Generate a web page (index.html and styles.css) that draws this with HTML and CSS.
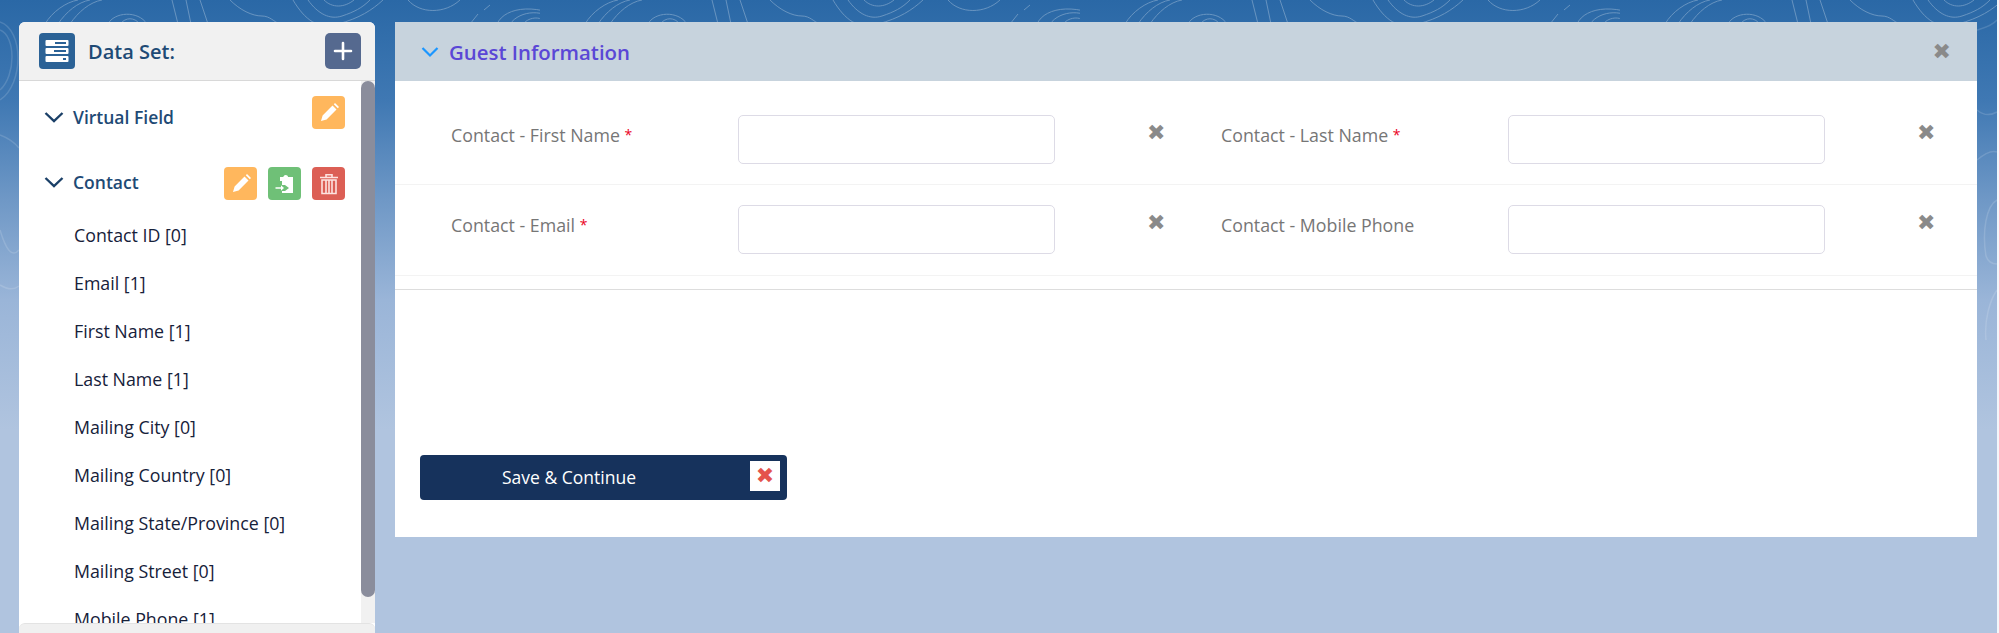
FILE: index.html
```html
<!DOCTYPE html>
<html lang="en">
<head>
    <meta charset="UTF-8">
    <title>Guest Information</title>
    <link rel="stylesheet" href="styles.css">
</head>
<body>
    <svg class="contours" width="1999" height="430" viewBox="0 0 1999 430" fill="none" stroke="#ffffff">
        <defs>
            <pattern id="topo" width="540" height="24" patternUnits="userSpaceOnUse">
                <path d="M45 24C52 12 66 2 78 0M58 24C66 12 78 2 90 0M70 24C78 12 90 2 102 0M108 24C114 12 138 10 147 24M120 24C126 17 134 17 140 24"/>
                <path d="M172 0L178 24M186 0L191 24M200 0L208 24"/>
                <path d="M230 0C240 10 252 16 262 16C270 16 274 22 280 24"/>
                <path d="M293 0C305 20 318 30 338 24C360 18 372 10 383 0M308 0C318 14 330 20 342 16C354 12 362 8 370 0M324 0C332 8 344 8 354 0"/>
                <path d="M408 0C420 14 445 14 460 0M470 24L478 14M484 10L490 5"/>
                <path d="M497 24C505 6 540 2 574 24M510 24C520 10 545 8 560 24M523 24C530 16 542 16 548 24"/>
            </pattern>
        </defs>
        <rect width="1999" height="24" fill="url(#topo)" stroke="none" opacity="0.28"/>
        <g stroke-opacity="0.14" stroke-width="1.5">
            <path d="M0 30C16 36 16 76 0 90M0 22C24 30 24 84 0 100M0 135C8 138 14 142 19 148M0 230C6 250 12 258 19 250M0 285C8 290 14 290 19 286"/>
            <path d="M1977 30C1984 28 1992 26 1997 20M1977 110C1984 116 1990 116 1997 112M1977 160C1984 154 1992 150 1997 152M1997 200C1986 206 1982 232 1986 256C1988 262 1992 264 1997 264M1997 290C1990 300 1984 320 1986 340"/>
        </g>
    </svg>

    <div class="page">
        <aside class="sidebar">
            <div class="sidebar-head">
                <span class="head-icon">
                    <svg width="36" height="36" viewBox="0 0 36 36" fill="#fff">
                        <rect x="6.500" y="7" width="23" height="6" rx="1"/>
                        <rect x="6.500" y="15" width="23" height="6" rx="1"/>
                        <rect x="6.500" y="23" width="23" height="6" rx="1"/>
                        <rect x="16" y="9" width="11" height="2" fill="#2b6296"/>
                        <rect x="15" y="17" width="12" height="2" fill="#2b6296"/>
                        <rect x="24" y="25" width="3" height="2" fill="#2b6296"/>
                    </svg>
                </span>
                <span class="head-title">Data Set:</span>
                <button class="add-btn">
                    <svg width="20" height="20" viewBox="0 0 20 20" stroke="#fff" stroke-width="2.6" stroke-linecap="round"><path d="M10 2v16M2 10h16"/></svg>
                </button>
            </div>
            <div class="sidebar-body">
                <div class="tree">
                    <div class="group group-first">
                        <svg class="chev" width="20" height="12" viewBox="0 0 20 12" fill="none" stroke="#1b4068" stroke-width="2.4"><path d="M1.500 2l8.500 8 8.500-8"/></svg>
                        <span class="group-name">Virtual Field</span>
                        <span class="tools">
                            <span class="tool orange">
                                <svg width="22" height="22" viewBox="0 0 22 22" fill="#fff"><path d="M3 19l1.600-5.600L14.500 3.500l4 4L8.600 17.400zM15.800 2.200l1.200-1.200 4 4-1.200 1.200z"/></svg>
                            </span>
                        </span>
                    </div>
                    <div class="group group-contact">
                        <svg class="chev" width="20" height="12" viewBox="0 0 20 12" fill="none" stroke="#1b4068" stroke-width="2.4"><path d="M1.500 2l8.500 8 8.500-8"/></svg>
                        <span class="group-name">Contact</span>
                        <span class="tools">
                            <span class="tool orange">
                                <svg width="22" height="22" viewBox="0 0 22 22" fill="#fff"><path d="M3 19l1.600-5.600L14.500 3.500l4 4L8.600 17.400zM15.800 2.200l1.200-1.200 4 4-1.200 1.200z"/></svg>
                            </span>
                            <span class="tool green">
                                <svg width="24" height="24" viewBox="0 0 24 24" fill="#fff"><path d="M7 5h3.200a2.600 2.600 0 0 1 5 0H20v16H9v-2h3l4-3-4-3H9V9H7z"/><path d="M2.500 15.200h5.500v-2l3 2.800-3 2.800v-2H2.500z"/></svg>
                            </span>
                            <span class="tool red">
                                <svg width="24" height="24" viewBox="0 0 24 24" fill="none" stroke="#fde3e0" stroke-width="1.600"><path d="M3 5.500h18M9 5V2.800h6V5"/><path d="M5 8h14v13.500H5zM9 8v13.500M12 8v13.500M15 8v13.500"/></svg>
                            </span>
                        </span>
                    </div>
                    <ul class="field-list">
                        <li>Contact ID [0]</li>
                        <li>Email [1]</li>
                        <li>First Name [1]</li>
                        <li>Last Name [1]</li>
                        <li>Mailing City [0]</li>
                        <li>Mailing Country [0]</li>
                        <li>Mailing State/Province [0]</li>
                        <li>Mailing Street [0]</li>
                        <li>Mobile Phone [1]</li>
                    </ul>
                </div>
                <div class="scroll-track"><div class="scroll-thumb"></div></div>
            </div>
            <div class="sidebar-foot"></div>
        </aside>

        <main class="panel">
            <div class="panel-head">
                <svg width="18" height="12" viewBox="0 0 18 12" fill="none" stroke="#1b96ff" stroke-width="2.200"><path d="M1.500 2l7.500 7.500L16.500 2"/></svg>
                <span class="panel-title">Guest Information</span>
                <span class="x-icon">&#10006;</span>
            </div>
            <div class="form-row form-row-first">
                <div class="field">
                    <label>Contact - First Name <span class="req">*</span></label>
                    <input type="text">
                    <span class="x-icon">&#10006;</span>
                </div>
                <div class="field">
                    <label>Contact - Last Name <span class="req">*</span></label>
                    <input type="text">
                    <span class="x-icon">&#10006;</span>
                </div>
            </div>
            <div class="form-row">
                <div class="field">
                    <label>Contact - Email <span class="req">*</span></label>
                    <input type="text">
                    <span class="x-icon">&#10006;</span>
                </div>
                <div class="field">
                    <label>Contact - Mobile Phone</label>
                    <input type="text">
                    <span class="x-icon">&#10006;</span>
                </div>
            </div>
            <div class="divider"></div>
            <div class="actions">
                <button class="save-btn">
                    <span class="save-label">Save &amp; Continue</span>
                    <span class="save-x">&#10006;</span>
                </button>
            </div>
        </main>
    </div>
</body>
</html>
```

FILE: styles.css
```css
html, body {
    margin: 0;
    padding: 0;
    height: 100%;
    overflow: hidden;
}
body {
    font-family: "Open Sans", Arial, sans-serif;
    background: linear-gradient(to bottom, #2a68a6 0, #3f78b3 100px, #6f98c6 200px, #9ab5d8 300px, #b0c4df 430px, #b0c4df 100%);
    position: relative;
}
/* thin light edge on the far right of the capture */
body::after {
    content: "";
    position: absolute;
    top: 0;
    right: 0;
    bottom: 0;
    width: 2px;
    background-color: #f4f6fa;
}
.contours {
    position: absolute;
    top: 0;
    left: 0;
}
.page {
    position: relative;
    display: flex;
    align-items: flex-start;
    gap: 20px;
    padding: 22px 22px 0 19px;
    height: 611px;
}

/* left column */
.sidebar {
    width: 356px;
    flex-shrink: 0;
    height: 611px;
    display: flex;
    flex-direction: column;
    border-radius: 6px 6px 0 0;
    overflow: hidden;
    background-color: #fff;
}
.sidebar-head {
    height: 59px;
    flex-shrink: 0;
    box-sizing: border-box;
    display: flex;
    align-items: center;
    padding: 0 14px 0 20px;
    background-color: #f1f1f1;
    border-bottom: 1px solid #d8d8d8;
}
.head-icon {
    width: 36px;
    height: 36px;
    border-radius: 4px;
    background-color: #2b6296;
    display: flex;
}
.head-title {
    margin-left: 13px;
    font-size: 20px;
    font-weight: 600;
    color: #1e4a75;
    flex: 1;
}
.add-btn {
    width: 36px;
    height: 36px;
    border: none;
    border-radius: 5px;
    padding: 0;
    background-color: #55698f;
    display: flex;
    align-items: center;
    justify-content: center;
}
.sidebar-body {
    flex: 1;
    display: flex;
    min-height: 0;
}
.tree {
    flex: 1;
    overflow: hidden;
}
.scroll-track {
    width: 14px;
    background-color: #f1f1f1;
}
.scroll-thumb {
    height: 516px;
    background-color: #8a8d9c;
    border-radius: 7px;
}
.group {
    display: flex;
    align-items: center;
    height: 33px;
    padding: 0 0 0 25px;
    margin-top: 29px;
}
.group-first {
    height: 42px;
    margin-top: 15px;
}
.group-first .tools {
    align-self: flex-start;
}
.group-name {
    margin-left: 9px;
    font-size: 17.500px;
    font-weight: 600;
    color: #1e4a75;
    flex: 1;
}
.group-contact .group-name,
.group-contact .chev {
    margin-bottom: 4px;
}
.tools {
    display: flex;
    gap: 11px;
    padding-right: 16px;
}
.tool {
    width: 33px;
    height: 33px;
    border-radius: 4px;
    display: flex;
    align-items: center;
    justify-content: center;
}
.orange {
    background-color: #ffb75d;
}
.green {
    background-color: #6fc077;
}
.red {
    background-color: #dc5f55;
}
.field-list {
    list-style-type: none;
    margin: 11px 0 0 0;
    padding: 0 0 0 55px;
}
.field-list li {
    height: 48px;
    line-height: 48px;
    font-size: 17.800px;
    color: #16213a;
    white-space: nowrap;
}
.sidebar-foot {
    height: 10px;
    flex-shrink: 0;
    box-sizing: border-box;
    background-color: #f0f0f0;
    border-radius: 6px 6px 0 0;
    border-top: 1px solid #e3e3e3;
}

/* main panel */
.panel {
    flex: 1;
    height: 515px;
    background-color: #fff;
    border-radius: 4px 0 0 0;
}
.panel-head {
    height: 59px;
    box-sizing: border-box;
    display: flex;
    align-items: center;
    padding: 0 26px 0 26px;
    background-color: #c7d3dd;
}
.panel-title {
    margin-left: 10px;
    font-size: 20.400px;
    font-weight: 600;
    color: #5a47d6;
    flex: 1;
}
.x-icon {
    font-family: "DejaVu Sans", sans-serif;
    font-size: 22px;
    line-height: 24px;
    color: #8a8a8a;
}
.form-row {
    display: grid;
    grid-template-columns: 770px 1fr;
    height: 90px;
    padding: 0 0 0 56px;
    border-bottom: 1px solid #f3f3f3;
}
.form-row-first {
    height: 103px;
}
.field {
    display: flex;
    align-items: flex-start;
    padding-top: 20px;
    box-sizing: border-box;
}
.form-row-first .field {
    padding-top: 34px;
}
.field label {
    width: 287px;
    flex-shrink: 0;
    padding-top: 8px;
    font-size: 17.800px;
    line-height: 24px;
    color: #767676;
}
.req {
    color: #ea001e;
    font-size: 14px;
    vertical-align: 2px;
}
.field input {
    width: 317px;
    height: 49px;
    box-sizing: border-box;
    margin: 0;
    border: 1px solid #dddbe6;
    border-radius: 5px;
    background-color: #fff;
}
.field .x-icon {
    margin-left: 92px;
    margin-top: 6px;
}
.divider {
    margin-top: 13px;
    border-top: 1px solid #dddddd;
}
.actions {
    padding: 165px 0 0 25px;
}
.save-btn {
    position: relative;
    width: 367px;
    height: 45px;
    border: none;
    border-radius: 4px;
    padding: 0;
    background-color: #16325c;
    color: #fff;
    font-family: inherit;
    font-size: 17.500px;
    display: flex;
    align-items: center;
}
.save-label {
    width: 298px;
    padding-bottom: 2px;
    text-align: center;
}
.save-x {
    position: absolute;
    right: 7px;
    top: 6px;
    width: 30px;
    height: 30px;
    background-color: #fff;
    color: #e4534d;
    font-family: "DejaVu Sans", sans-serif;
    font-size: 22px;
    line-height: 30px;
    text-align: center;
}
```
